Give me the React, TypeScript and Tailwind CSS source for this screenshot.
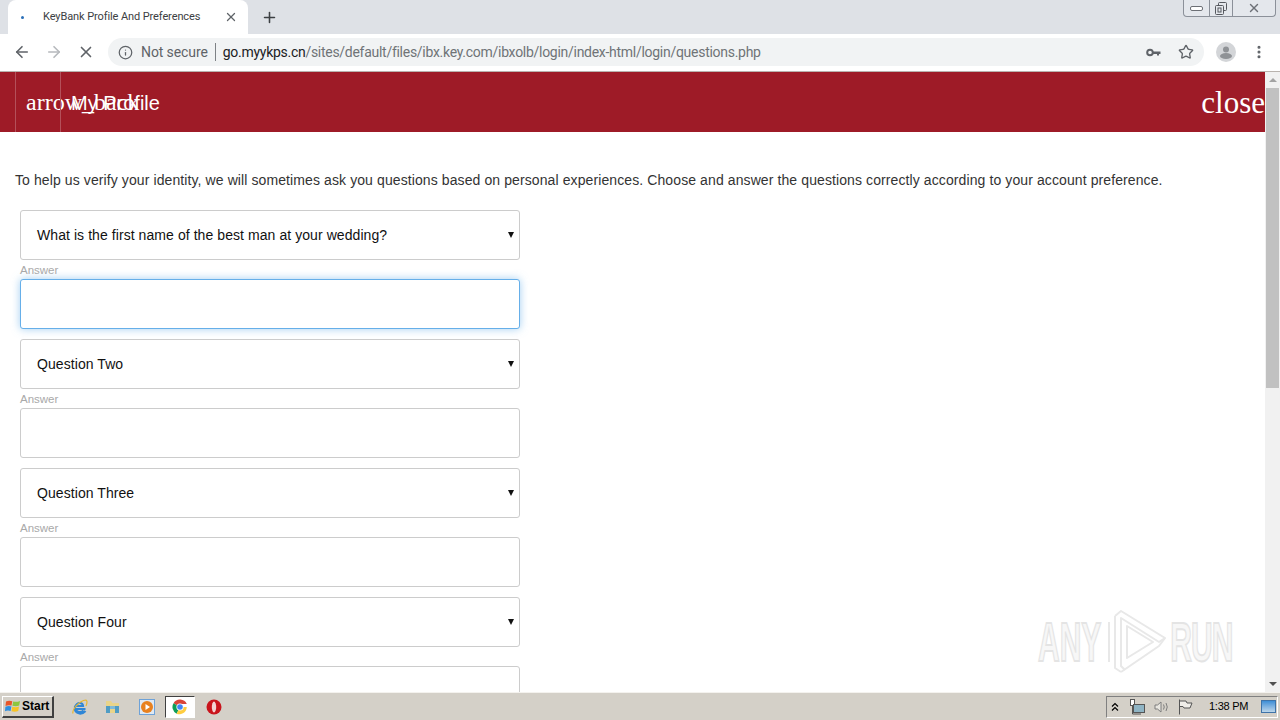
import { ArrowLeft, ArrowRight, X, Plus, Info, Star, EllipsisVertical } from 'lucide-react'

const ui = "font-['Roboto',sans-serif]"

const questions = [
  'What is the first name of the best man at your wedding?',
  'Question Two',
  'Question Three',
  'Question Four',
]

function TabStrip() {
  return (
    <div className="flex h-[34px] shrink-0 items-end bg-[#dee1e6] pl-[8px]">
      <div className="flex h-[34px] w-[240px] items-center rounded-t-[8px] bg-white pl-[13px] pr-[10px]">
        <div className="mr-[19px] h-[3px] w-[3px] rounded-full bg-[#2a6fb8]" />
        <span className={`flex-1 whitespace-nowrap text-[11px] tracking-[-0.1px] text-[#3c4043] ${ui}`}>KeyBank Profile And Preferences</span>
        <X size={14} strokeWidth={2.2} className="text-[#5f6368]" />
      </div>
      <div className="flex h-[34px] w-[42px] items-center justify-center">
        <Plus size={17} strokeWidth={2.2} className="text-[#3c4043]" />
      </div>
      <div className="flex-1" />
      <WindowControls />
    </div>
  )
}

function WindowControls() {
  return (
    <div className="mb-auto mr-[4px] flex h-[17px] w-[93px] rounded-b-[4px] border border-t-0 border-[#8b9099] bg-[#e4e7ec]">
      <div className="flex w-[26px] items-center justify-center border-r border-[#8b9099]">
        <div className="h-[5px] w-[13px] rounded-[2px] border border-[#6d7076] bg-white" />
      </div>
      <div className="flex w-[23px] items-center justify-center border-r border-[#8b9099]">
        <svg width="13" height="13" viewBox="0 0 13 13" fill="none" stroke="#55585e">
          <rect x="3.5" y="0.5" width="8" height="8" rx="1" />
          <rect x="0.5" y="3.5" width="8" height="9" rx="1" fill="#e4e7ec" />
          <rect x="3" y="6" width="3" height="4" />
        </svg>
      </div>
      <div className="flex flex-1 items-center justify-center">
        <X size={14} strokeWidth={2.4} className="text-[#6d7076]" />
      </div>
    </div>
  )
}

function KeyIcon() {
  return (
    <svg width="15" height="9" viewBox="0 0 15 9" fill="none" className="mr-[17px]">
      <circle cx="4" cy="4.5" r="2.8" stroke="#5f6368" strokeWidth="2" />
      <path d="M7 3.5 H14.5 V6 H13 V7.5 H11 V6 H7 Z" fill="#5f6368" />
    </svg>
  )
}

function Toolbar() {
  return (
    <div className="flex h-[38px] shrink-0 items-center border-b border-[#b9b3ae] bg-white pb-[1px]">
      <div className="flex w-[108px] shrink-0 items-center pl-[13px]">
        <ArrowLeft size={18} strokeWidth={2.2} className="text-[#5f6368]" />
        <ArrowRight size={18} strokeWidth={2.2} className="ml-[14px] text-[#b6b9bd]" />
        <X size={18} strokeWidth={2.2} className="ml-[14px] text-[#5f6368]" />
      </div>
      <div className="flex h-[28px] w-[1096px] items-center rounded-full bg-[#f1f3f4] pl-[10px] pr-[10px]">
        <Info size={15} strokeWidth={2} className="text-[#5f6368]" />
        <span className={`ml-[8px] whitespace-nowrap text-[14px] tracking-[-0.1px] text-[#5f6368] ${ui}`}>Not secure</span>
        <div className="mx-[7px] h-[18px] w-px bg-[#7d8185]" />
        <span className={`whitespace-nowrap text-[14px] tracking-[-0.28px] text-[#202124] ${ui}`}>
          go.myykps.cn
          <span className="text-[#6f7377]">/sites/default/files/ibx.key.com/ibxolb/login/index-html/login/questions.php</span>
        </span>
        <div className="flex-1" />
        <KeyIcon />
        <Star size={16} strokeWidth={2} className="text-[#5f6368]" />
      </div>
      <div className="ml-[12px] flex h-[20px] w-[20px] items-center justify-center overflow-hidden rounded-full bg-[#d3d5d8]">
        <svg width="20" height="20" viewBox="0 0 20 20" fill="#8f9296">
          <circle cx="10" cy="7.5" r="3" />
          <ellipse cx="10" cy="14" rx="6" ry="3" />
        </svg>
      </div>
      <EllipsisVertical size={16} strokeWidth={2.6} className="ml-[15px] text-[#5f6368]" />
    </div>
  )
}

function Scrollbar() {
  return (
    <div className="flex w-[15px] shrink-0 flex-col items-center bg-[#f1f1f1]">
      <div className="flex h-[16px] w-full items-center justify-center">
        <div className="h-0 w-0 border-x-[4px] border-b-[4px] border-x-transparent border-b-[#a3a3a3]" />
      </div>
      <div className="h-[300px] w-[13px] bg-[#c1c1c1]" />
      <div className="flex-1" />
      <div className="flex h-[16px] w-full items-center justify-center">
        <div className="h-0 w-0 border-x-[4px] border-t-[4px] border-x-transparent border-t-[#505050]" />
      </div>
    </div>
  )
}

function Question({ label, focused }: { label: string; focused?: boolean }) {
  return (
    <div className="mb-[10px] w-[500px]">
      <div className="relative flex h-[50px] items-center rounded-[3px] border border-[#ccc] bg-white pl-[16px]">
        <span className="text-[14px] tracking-[0.07px] text-[#111] font-['Liberation_Sans',sans-serif]">{label}</span>
        <span className="absolute right-[5px] top-[21px] h-0 w-0 border-x-[3px] border-t-[6px] border-x-transparent border-t-[#111]" />
      </div>
      <div className="mt-[2px] h-[17px] text-[11.5px] leading-[16px] text-[#a9a9a9] font-['Liberation_Sans',sans-serif]">Answer</div>
      <div
        className={
          focused
            ? 'h-[50px] rounded-[3px] border border-[#66afe9] bg-white shadow-[0_0_8px_rgba(102,175,233,0.6)]'
            : 'h-[50px] rounded-[3px] border border-[#ccc] bg-white'
        }
      />
    </div>
  )
}

function Watermark() {
  const letters = "whitespace-nowrap text-[30px] leading-none font-bold scale-y-[1.86] text-[#f7f7f7] [-webkit-text-stroke:1px_#e4e4e4] font-['Liberation_Sans',sans-serif]"
  return (
    <div className="absolute left-[1038px] top-[538px] flex items-center">
      <span className={letters}>ANY</span>
      <svg width="60" height="64" viewBox="0 0 60 64" fill="none" stroke="#e8e8e8" strokeWidth="2" strokeLinejoin="round" className="ml-[6px] mr-[3px]">
        <path d="M2 12 V52" />
        <path d="M8 6 L14 1 L58 28 L52 32 L14 8 V56 L18 60" />
        <path d="M14 62 L52 36 L58 28" />
        <path d="M20 16 L46 32 L20 48 Z" />
        <path d="M8 6 V58 L14 62" />
      </svg>
      <span className={`${letters} tracking-[-1px]`}>RUN</span>
    </div>
  )
}

function Page() {
  return (
    <div className="relative flex min-h-0 flex-1">
      <div className="min-w-0 flex-1 overflow-hidden bg-white">
        <div className="flex h-[60px] items-stretch overflow-hidden bg-[#9e1b27] text-white">
          <div className="ml-[15px] flex w-[45px] items-center whitespace-nowrap border-l border-[#b4505a] pl-[10px] text-[24px] font-['Liberation_Serif',serif]">
            arrow_back
          </div>
          <div className="flex items-center whitespace-nowrap border-l border-[#b4505a] pl-[10px] pt-[2px] text-[20px] font-['Liberation_Sans',sans-serif]">
            My Profile
          </div>
          <div className="flex-1" />
          <div className="flex items-center pt-[2px] text-[31px] font-['Liberation_Serif',serif]">close</div>
        </div>
        <p className="mx-[15px] mt-[38px] whitespace-nowrap text-[14px] leading-[20px] tracking-[0.1px] text-[#333] font-['Liberation_Sans',sans-serif]">
          To help us verify your identity, we will sometimes ask you questions based on personal experiences. Choose and answer the questions correctly according to your account preference.
        </p>
        <div className="ml-[20px] mt-[20px]">
          {questions.map((q, i) => (
            <Question key={q} label={q} focused={i === 0} />
          ))}
        </div>
      </div>
      <Scrollbar />
      <Watermark />
    </div>
  )
}

function ChromeIcon() {
  return (
    <svg width="16" height="16" viewBox="0 0 16 16">
      <path d="M8 8 L1.5 4.2 A7.5 7.5 0 0 1 14.8 5 H8 Z" fill="#db4437" />
      <path d="M8 8 L4.6 14.7 A7.5 7.5 0 0 1 1.5 4.2 Z" fill="#0f9d58" />
      <path d="M8 8 H14.8 A7.5 7.5 0 0 1 4.6 14.7 Z" fill="#ffcd40" />
      <circle cx="8" cy="8" r="3.6" fill="#fff" />
      <circle cx="8" cy="8" r="2.8" fill="#4285f4" />
    </svg>
  )
}

function Taskbar() {
  return (
    <div className="flex h-[28px] shrink-0 items-center border-t border-[#f4f2ee] bg-[#d4d0c8]">
      <div className="ml-[2px] flex h-[22px] w-[52px] items-center border border-b-2 border-r-2 border-[#fff] border-b-[#404040] border-r-[#404040] pl-[2px]">
        <svg width="16" height="16" viewBox="0 0 16 16">
          <path d="M1 3.5 Q4 2 7.3 3.2 L6.5 7.6 Q3.5 6.6 0.5 8 Z" fill="#e8562a" />
          <path d="M8.2 3.4 Q11.5 4.5 15 3 L14.2 7.6 Q11 8.8 7.4 7.8 Z" fill="#8cc63f" />
          <path d="M0.4 8.8 Q3.5 7.5 6.4 8.5 L5.6 13 Q2.8 12 0 13.2 Z" fill="#2f8fe0" />
          <path d="M7.3 8.7 Q11 9.7 14 8.5 L13.2 13 Q10 14.2 6.5 13.2 Z" fill="#f7c325" />
        </svg>
        <span className="ml-[1px] text-[12px] font-bold text-black font-['Liberation_Sans',sans-serif]">Start</span>
      </div>
      <div className="ml-[17px] flex h-[24px] items-center">
        <svg width="18" height="18" viewBox="0 0 18 18" fill="none">
          <path d="M14.5 11 H5 Q5.2 14 8.5 14 Q11 14 12.5 12.5 M5 8 H12 Q11.8 5 8.8 5 Q5.5 5 4 9 Q3.2 14.5 8.5 15.5 Q12 15.8 14.5 13" stroke="#2f86d6" strokeWidth="2.2" />
          <path d="M2 15.5 Q1 13 5 8 Q10 2.5 15 2 Q17 3 15 8" stroke="#e8b62c" strokeWidth="1.2" />
        </svg>
        <svg width="17" height="17" viewBox="0 0 17 17" className="ml-[15px]">
          <path d="M2 3 H7 L8.5 5 H15 V15 H2 Z" fill="#e9d48a" />
          <path d="M2 8 H6 V15 H2 Z M11 8 H15 V15 H11 Z" fill="#4f9cc4" />
          <rect x="6" y="8" width="5" height="3" fill="#7fbad8" />
        </svg>
        <div className="ml-[18px] flex h-[16px] w-[16px] items-center justify-center border border-[#6ea2d8] bg-[#dfe9f3]">
          <svg width="12" height="12" viewBox="0 0 12 12">
            <circle cx="6" cy="6" r="6" fill="#e8811f" />
            <path d="M4.5 3 L9 6 L4.5 9 Z" fill="#fff" />
          </svg>
        </div>
        <div className="ml-[10px] flex h-[22px] w-[30px] items-center justify-center border border-[#404040] border-b-white border-r-white bg-white">
          <ChromeIcon />
        </div>
        <svg width="16" height="16" viewBox="0 0 16 16" className="ml-[11px]">
          <circle cx="8" cy="8" r="7.5" fill="#c9141c" />
          <ellipse cx="8" cy="8" rx="2.2" ry="5.4" fill="#f3d3d3" />
        </svg>
      </div>
      <div className="flex-1" />
      <div className="mr-[2px] flex h-[22px] w-[172px] items-center border border-[#808080] border-b-white border-r-white pl-[4px]">
        <svg width="8" height="10" viewBox="0 0 8 10" fill="none" stroke="#000" strokeWidth="1.2">
          <path d="M1 4.5 L4 1.5 L7 4.5" />
          <path d="M1 8.5 L4 5.5 L7 8.5" />
        </svg>
        <svg width="17" height="16" viewBox="0 0 17 16" className="ml-[10px]" fill="none" stroke="#555">
          <rect x="1.5" y="0.5" width="4" height="6" fill="#fff" />
          <rect x="4.5" y="5.5" width="11" height="8" fill="#8fb4c4" />
          <path d="M3.5 7 V15 H12" />
        </svg>
        <svg width="16" height="14" viewBox="0 0 16 14" className="ml-[8px]" fill="none" stroke="#7d7d7d">
          <path d="M1 5 H3.5 L7 2 V12 L3.5 9 H1 Z" fill="#e8e6e0" />
          <path d="M9.5 4.5 Q11 7 9.5 9.5" />
          <path d="M12 3 Q14.5 7 12 11" />
        </svg>
        <svg width="15" height="16" viewBox="0 0 15 16" className="ml-[8px]" fill="none" stroke="#555">
          <path d="M1.5 0.5 V15.5" />
          <path d="M2 2 H8 L9 4 H14 L12 9 H6 L5 7.5 H2" fill="#efede8" />
        </svg>
        <span className="ml-[16px] w-[39px] whitespace-nowrap text-[11px] tracking-[-0.25px] text-black font-['Liberation_Sans',sans-serif]">1:38 PM</span>
        <div className="ml-[13px] h-[13px] w-[15px] border border-[#3f73a8] bg-gradient-to-b from-[#3d8fd6] to-[#bcd6ea]" />
      </div>
    </div>
  )
}

export default function App() {
  return (
    <div className="flex h-screen w-full flex-col overflow-hidden bg-white">
      <TabStrip />
      <Toolbar />
      <Page />
      <Taskbar />
    </div>
  )
}
